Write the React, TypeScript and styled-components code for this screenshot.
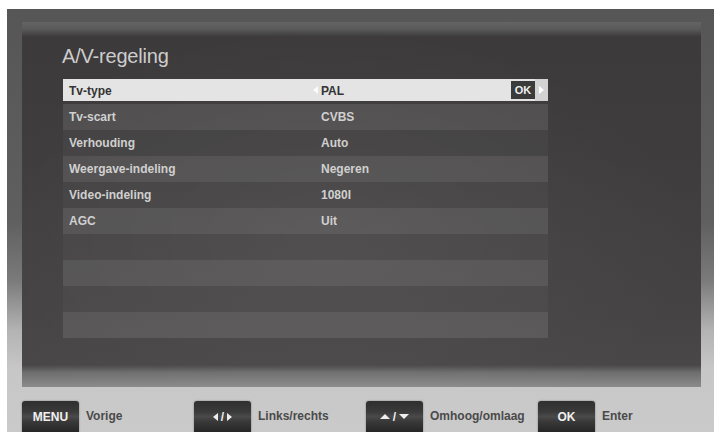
import React from "react";
import styled, { createGlobalStyle } from "styled-components";

const GlobalStyle = createGlobalStyle`
  html, body {
    margin: 0;
    padding: 0;
    background: #ffffff;
    font-family: "Liberation Sans", Arial, sans-serif;
  }
`;

const Page = styled.div`
  width: 718px;
  height: 440px;
  padding: 9px 0 0 7px;
  box-sizing: border-box;
  overflow: hidden;
`;

const Frame = styled.div`
  width: 707px;
  height: 423px;
  box-sizing: border-box;
  padding: 13px 13px 0 15px;
  display: flex;
  flex-direction: column;
  background: linear-gradient(
    to bottom,
    #565656 0%,
    #5f5f5f 50%,
    #7a7a7a 64%,
    #b3b3b3 76%,
    #c7c7c7 85%,
    #cacaca 100%
  );
  overflow: hidden;
`;

const Screen = styled.div`
  height: 367px;
  box-sizing: border-box;
  padding: 23px 0 0 40px;
  background:
    radial-gradient(ellipse at 45% 60%, rgba(255, 255, 255, 0.05), transparent 70%),
    linear-gradient(
      to bottom,
      #646464 0px,
      #5a5a5a 7px,
      #3c3a3a 15px,
      #3e3c3c 35%,
      #454343 80%,
      #494747 94%,
      #6e6e6e 96%,
      #8b8b8b 100%
    );
`;

const Title = styled.h1`
  margin: 0 0 11px;
  font-size: 20px;
  font-weight: normal;
  line-height: 22px;
  color: #cdcdcd;
  letter-spacing: -0.2px;
`;

const Rows = styled.div`
  width: 485px;
  margin-left: 1px;
  display: flex;
  flex-direction: column;
`;

type Tone = "sel" | "light" | "dark";

const Row = styled.div<{ $tone: Tone }>`
  display: grid;
  grid-template-columns: 246px 12px 1fr 24px 13px;
  align-items: center;
  height: 26px;
  font-size: 12px;
  font-weight: bold;
  color: ${(p) => (p.$tone === "sel" ? "#333333" : "#d0d0d0")};
  background: ${(p) =>
    p.$tone === "sel"
      ? "linear-gradient(#e4e4e4, #e4e4e4) 0 1px / 100% 22px no-repeat"
      : p.$tone === "light"
      ? "rgba(255, 255, 255, 0.1)"
      : "rgba(255, 255, 255, 0.03)"};
`;

const Label = styled.span`
  padding-left: 6px;
`;

const Arrow = styled.span<{ $dir: "left" | "right"; $strip?: boolean }>`
  display: flex;
  align-items: center;
  justify-content: center;
  align-self: stretch;
  margin: 1px 0 3px;
  background: ${(p) => (p.$strip ? "#d3d3d3" : "transparent")};
  &::before {
    content: "";
    width: 0;
    height: 0;
    border-top: 4px solid transparent;
    border-bottom: 4px solid transparent;
    ${(p) =>
      p.$dir === "left"
        ? "border-right: 5px solid #fbfbfb;"
        : "border-left: 5px solid #ffffff;"}
  }
`;

const OkBadge = styled.span`
  display: flex;
  align-items: center;
  justify-content: center;
  height: 18px;
  margin-top: -2px;
  background: #3b3b3b;
  color: #eeeeee;
  font-size: 11px;
  font-weight: bold;
`;

const Footer = styled.div`
  display: grid;
  grid-template-columns: repeat(4, 172px);
  padding-top: 14px;
`;

const Hint = styled.div`
  display: flex;
  align-items: flex-start;
  gap: 7px;
`;

const Key = styled.div`
  width: 57px;
  height: 31px;
  border-radius: 3px 3px 0 0;
  display: flex;
  align-items: center;
  justify-content: center;
  gap: 3px;
  color: #f0f0f0;
  font-size: 12px;
  font-weight: bold;
  background: linear-gradient(
    to bottom,
    #2f2f2f 0%,
    #3a3a3a 35%,
    #4a4a4a 50%,
    #3a3a3a 65%,
    #262626 100%
  );
  box-shadow: 0 0 2px rgba(0, 0, 0, 0.4);
`;

const KeyTri = styled.span<{ $dir: "left" | "right" | "up" | "down" }>`
  width: 0;
  height: 0;
  ${(p) =>
    p.$dir === "left"
      ? "border-top: 4px solid transparent; border-bottom: 4px solid transparent; border-right: 5px solid #eee;"
      : p.$dir === "right"
      ? "border-top: 4px solid transparent; border-bottom: 4px solid transparent; border-left: 5px solid #eee;"
      : p.$dir === "up"
      ? "border-left: 5px solid transparent; border-right: 5px solid transparent; border-bottom: 5px solid #eee;"
      : "border-left: 5px solid transparent; border-right: 5px solid transparent; border-top: 5px solid #eee;"}
`;

const HintText = styled.span`
  line-height: 31px;
  font-size: 12px;
  font-weight: bold;
  color: #4a4a4a;
`;

const settings: [string, string][] = [
  ["Tv-type", "PAL"],
  ["Tv-scart", "CVBS"],
  ["Verhouding", "Auto"],
  ["Weergave-indeling", "Negeren"],
  ["Video-indeling", "1080I"],
  ["AGC", "Uit"],
  ["", ""],
  ["", ""],
  ["", ""],
  ["", ""],
];

export default function App() {
  return (
    <>
      <GlobalStyle />
      <Page>
        <Frame>
          <Screen>
            <Title>A/V-regeling</Title>
            <Rows>
              {settings.map(([label, value], i) => {
                const tone: Tone = i === 0 ? "sel" : i % 2 === 1 ? "light" : "dark";
                return (
                  <Row key={i} $tone={tone}>
                    <Label>{label}</Label>
                    {i === 0 ? <Arrow $dir="left" /> : <span />}
                    <span>{value}</span>
                    {i === 0 ? <OkBadge>OK</OkBadge> : <span />}
                    {i === 0 ? <Arrow $dir="right" $strip /> : <span />}
                  </Row>
                );
              })}
            </Rows>
          </Screen>
          <Footer>
            <Hint>
              <Key>MENU</Key>
              <HintText>Vorige</HintText>
            </Hint>
            <Hint>
              <Key>
                <KeyTri $dir="left" />/<KeyTri $dir="right" />
              </Key>
              <HintText>Links/rechts</HintText>
            </Hint>
            <Hint>
              <Key>
                <KeyTri $dir="up" />/<KeyTri $dir="down" />
              </Key>
              <HintText>Omhoog/omlaag</HintText>
            </Hint>
            <Hint>
              <Key>OK</Key>
              <HintText>Enter</HintText>
            </Hint>
          </Footer>
        </Frame>
      </Page>
    </>
  );
}
